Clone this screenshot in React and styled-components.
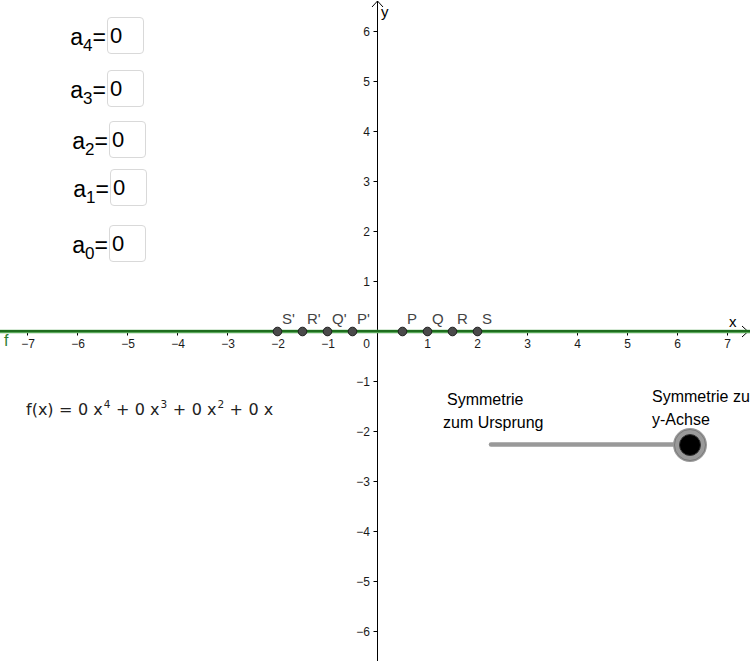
import styled, { createGlobalStyle } from "styled-components";

const GlobalStyle = createGlobalStyle`
  html, body {
    margin: 0;
    padding: 0;
    background: #ffffff;
  }
  body {
    font-family: "Liberation Sans", Arial, sans-serif;
  }
`;

// graph geometry
const OX = 377.5;
const OY = 331.5;
const UNIT = 50;

const coefficients = [
  { sub: 4, left: 107, top: 17 },
  { sub: 3, left: 107, top: 70 },
  { sub: 2, left: 109, top: 121 },
  { sub: 1, left: 110, top: 169 },
  { sub: 0, left: 109, top: 225 },
];

const points = [
  { name: "S'", x: -2 },
  { name: "R'", x: -1.5 },
  { name: "Q'", x: -1 },
  { name: "P'", x: -0.5 },
  { name: "P", x: 0.5 },
  { name: "Q", x: 1 },
  { name: "R", x: 1.5 },
  { name: "S", x: 2 },
];

const xTicks = [-7, -6, -5, -4, -3, -2, -1, 1, 2, 3, 4, 5, 6, 7];
const yTicks = [6, 5, 4, 3, 2, 1, -1, -2, -3, -4, -5, -6];

const num = (n) => (n < 0 ? "\u2212" + Math.abs(n) : String(n));

const App = () => {
  return (
    <>
      <GlobalStyle />
      <Canvas>
        <Graph width="750" height="664" viewBox="0 0 750 664">
          {/* axes */}
          <line x1="0" y1={OY} x2="748" y2={OY} stroke="#000" strokeWidth="1" />
          <line x1={OX} y1="1" x2={OX} y2="661" stroke="#000" strokeWidth="1" />
          <polyline
            points={`742,${OY - 5.5} 748,${OY} 742,${OY + 5.5}`}
            fill="none"
            stroke="#000"
            strokeWidth="1"
          />
          <polyline
            points={`${OX - 5.5},7 ${OX},1 ${OX + 5.5},7`}
            fill="none"
            stroke="#000"
            strokeWidth="1"
          />

          {xTicks.map((t) => (
            <g key={"x" + t}>
              <line
                x1={OX + t * UNIT}
                y1={OY}
                x2={OX + t * UNIT}
                y2={OY + 4}
                stroke="#000"
              />
              <TickLabel x={OX + t * UNIT + (t < 0 ? 0.5 : 0)} y="347.5" textAnchor="middle">
                {num(t)}
              </TickLabel>
            </g>
          ))}
          <TickLabel x="370" y="347.5" textAnchor="end">0</TickLabel>

          {yTicks.map((t) => (
            <g key={"y" + t}>
              <line
                x1={OX - 4}
                y1={OY - t * UNIT}
                x2={OX}
                y2={OY - t * UNIT}
                stroke="#000"
              />
              <TickLabel x="370" y={OY - t * UNIT + 4.5} textAnchor="end">
                {num(t)}
              </TickLabel>
            </g>
          ))}

          <AxisName x="729" y="327">x</AxisName>
          <AxisName x="381" y="17">y</AxisName>

          {/* f(x) = 0 */}
          <line x1="0" y1={OY} x2="750" y2={OY} stroke="#5aa85a" strokeWidth="3.5" />
          <line x1="0" y1={OY - 0.5} x2="750" y2={OY - 0.5} stroke="#0b5a0b" strokeWidth="1.5" />
          <FuncName x="4" y="346">f</FuncName>

          {/* points on the x axis */}
          {points.map((p) => (
            <g key={p.name}>
              <circle
                cx={OX + p.x * UNIT}
                cy={OY}
                r="4.3"
                fill="#4a4a4a"
                stroke="#1f1f1f"
                strokeWidth="1"
              />
              <PointLabel x={OX + p.x * UNIT + 4.5} y="324">
                {p.name}
              </PointLabel>
            </g>
          ))}

          {/* symmetry slider */}
          <line
            x1="491"
            y1="444.5"
            x2="690"
            y2="444.5"
            stroke="#999"
            strokeWidth="4.5"
            strokeLinecap="round"
          />
          <circle cx="690" cy="445" r="17" fill="#9a9a9a" />
          <circle cx="690" cy="445" r="15.5" fill="none" stroke="#7a7a7a" strokeWidth="1" />
          <circle cx="690" cy="445" r="10.5" fill="#000" stroke="#333" strokeWidth="1" />
        </Graph>

        {coefficients.map((c) => (
          <Field key={c.sub} $left={c.left} $top={c.top}>
            <FieldLabel>
              a<sub>{c.sub}</sub>=
            </FieldLabel>
            <FieldBox>0</FieldBox>
          </Field>
        ))}

        <Formula>
          <span>f(x)</span>
          <Op>=</Op>
          <span>0 x<Sup>4</Sup></span>
          <Op>+</Op>
          <span>0 x<Sup>3</Sup></span>
          <Op>+</Op>
          <span>0 x<Sup>2</Sup></span>
          <Op>+</Op>
          <span>0 x</span>
        </Formula>

        <Caption $left={443} $top={388}>
          <CaptionLine $indent={4}>Symmetrie</CaptionLine>
          <CaptionLine>zum Ursprung</CaptionLine>
        </Caption>
        <Caption $left={652} $top={385}>
          <CaptionLine>Symmetrie zu</CaptionLine>
          <CaptionLine>y-Achse</CaptionLine>
        </Caption>
      </Canvas>
    </>
  );
};

export default App;

const Canvas = styled.div`
  position: relative;
  width: 750px;
  height: 664px;
  overflow: hidden;
  background: #fff;
`;

const Graph = styled.svg`
  position: absolute;
  left: 0;
  top: 0;
  display: block;
`;

const TickLabel = styled.text`
  font-family: "Liberation Sans", Arial, sans-serif;
  font-size: 12px;
  fill: #1a1a1a;
`;

const AxisName = styled.text`
  font-family: "Liberation Sans", Arial, sans-serif;
  font-size: 15px;
  fill: #000;
`;

const FuncName = styled.text`
  font-family: "Liberation Sans", Arial, sans-serif;
  font-size: 16px;
  fill: #2e7d2e;
`;

const PointLabel = styled.text`
  font-family: "Liberation Sans", Arial, sans-serif;
  font-size: 15px;
  fill: #444;
`;

const Field = styled.div`
  position: absolute;
  left: ${(p) => p.$left - 44}px;
  top: ${(p) => p.$top}px;
  display: flex;
  align-items: center;
  height: 37px;
`;

const FieldLabel = styled.div`
  width: 43px;
  padding-right: 1px;
  text-align: right;
  font-size: 23px;
  line-height: 26px;
  color: #000;
  margin-top: 2px;

  sub {
    font-size: 17px;
    line-height: 0;
    vertical-align: -6px;
  }
`;

const FieldBox = styled.div`
  box-sizing: border-box;
  width: 37px;
  height: 37px;
  border: 1px solid #d9d9d9;
  border-radius: 4px;
  padding: 5px 0 0 2px;
  font-size: 22px;
  line-height: 26px;
  color: #000;
`;

const Formula = styled.div`
  position: absolute;
  left: 26px;
  top: 399px;
  display: flex;
  align-items: baseline;
  white-space: pre;
  font-family: "DejaVu Sans", Verdana, sans-serif;
  font-size: 16px;
  line-height: 22px;
  color: #222;
`;

const Op = styled.span`
  padding: 0 5.5px;
`;

const Sup = styled.span`
  font-size: 10.5px;
  position: relative;
  top: -7px;
  margin-left: 1px;
`;

const Caption = styled.div`
  position: absolute;
  left: ${(p) => p.$left}px;
  top: ${(p) => p.$top}px;
  display: flex;
  flex-direction: column;
  font-size: 16px;
  line-height: 23px;
  color: #000;
  white-space: nowrap;
`;

const CaptionLine = styled.span`
  padding-left: ${(p) => p.$indent || 0}px;
`;
